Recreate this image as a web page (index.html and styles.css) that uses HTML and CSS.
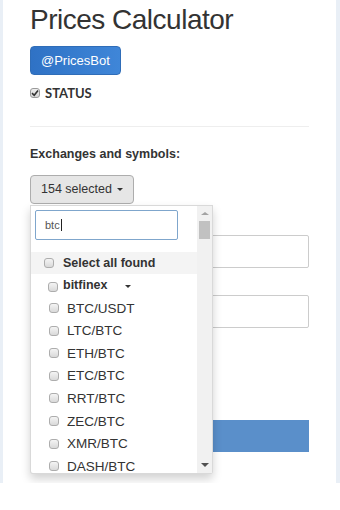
FILE: index.html
```html
<!DOCTYPE html>
<html lang="en">
<head>
    <meta charset="UTF-8">
    <meta name="viewport" content="width=device-width, initial-scale=1.0">
    <title>Prices Calculator</title>
    <link rel="stylesheet" href="styles.css">
</head>
<body>

<div class="page">
<div class="container">

    <h1 class="title">Prices Calculator</h1>
    <a class="btn btn-primary">@PricesBot</a>

    <div class="status">
        <span class="box checked">
            <svg width="8" height="8" viewBox="0 0 8 8"><path d="M1 4.2 L3.2 6.3 L7 1.5" fill="none" stroke="#333" stroke-width="1.6"/></svg>
        </span>
        <span class="status-text">STATUS</span>
    </div>

    <hr>

    <label class="section-label">Exchanges and symbols:</label>

    <!-- Multiselect with open menu -->
    <div class="btn-group">
        <button class="btn btn-default">154 selected <span class="caret"></span></button>

        <div class="dropdown-menu">
            <div class="menu-list">
                <div class="search-box">btc<span class="cursor"></span></div>

                <div class="opt select-all"><span class="box"></span>Select all found</div>
                <div class="opt group"><span class="box"></span>bitfinex <span class="caret group-caret"></span></div>
                <div class="opt item"><span class="box"></span>BTC/USDT</div>
                <div class="opt item"><span class="box"></span>LTC/BTC</div>
                <div class="opt item"><span class="box"></span>ETH/BTC</div>
                <div class="opt item"><span class="box"></span>ETC/BTC</div>
                <div class="opt item"><span class="box"></span>RRT/BTC</div>
                <div class="opt item"><span class="box"></span>ZEC/BTC</div>
                <div class="opt item"><span class="box"></span>XMR/BTC</div>
                <div class="opt item"><span class="box"></span>DASH/BTC</div>
            </div>
            <div class="scrollbar">
                <div class="arrow-up"></div>
                <div class="thumb"></div>
                <div class="track"></div>
                <div class="arrow-down"></div>
            </div>
        </div>
    </div>

    <!-- Form under the menu (labels are hidden by the open menu) -->
    <div class="form-group">
        <input type="text" class="form-control">
    </div>
    <div class="form-group">
        <input type="text" class="form-control">
    </div>
    <div class="note"></div>
    <button class="btn btn-calc"></button>

</div>
</div>

</body>
</html>
```

FILE: styles.css
```css
body {
    margin: 0;
    background-color: #fff;
    font-family: "Liberation Sans", Arial, sans-serif;
    color: #333;
}
.page {
    height: 483px;
    border-left: 3px solid #e9eff6;
    border-right: 4px solid #e9eff6;
    background-color: #fff;
    overflow: hidden;
}
.container {
    padding: 0 27px;
}
.title {
    margin: 5px 0 0;
    font-size: 28px;
    font-weight: normal;
    line-height: 1.1;
    letter-spacing: -0.5px;
    color: #333;
}
.btn {
    display: inline-block;
    box-sizing: border-box;
    font-family: "Liberation Sans", Arial, sans-serif;
    font-size: 13px;
    line-height: 15px;
    padding: 6px 10px;
    border: 1px solid transparent;
    border-radius: 4px;
    cursor: pointer;
}
.btn-primary {
    margin-top: 10px;
    color: #fff;
    background: linear-gradient(to right, #2f72c5, #3f86d8);
    border-color: #2f6db8;
}
.status {
    display: flex;
    align-items: center;
    margin-top: 11px;
    height: 15px;
}
.status-text {
    margin-left: 5px;
    font-family: Lato, "Liberation Sans", sans-serif;
    font-weight: bold;
    font-size: 13px;
    color: #333;
}
.box {
    display: inline-flex;
    align-items: center;
    justify-content: center;
    box-sizing: border-box;
    width: 10px;
    height: 10px;
    border: 1px solid #adadad;
    border-radius: 3px;
    background: linear-gradient(#f4f4f4, #d9d9d9);
    flex-shrink: 0;
}
.box.checked {
    border-color: #9a9a9a;
    background: linear-gradient(#eeeeee, #d6d6d6);
}
hr {
    margin: 25px 0 0;
    border: 0;
    border-top: 1px solid #eee;
}
.section-label {
    display: block;
    margin-top: 18px;
    font-size: 12.5px;
    font-weight: bold;
    line-height: 18px;
}
.btn-group {
    position: relative;
    margin-top: 12px;
    height: 29px;
}
.btn-default {
    height: 29px;
    padding: 6px 10px;
    font-size: 12.5px;
    color: #333;
    background-color: #e6e6e6;
    border-color: #adadad;
}
.caret {
    display: inline-block;
    width: 0;
    height: 0;
    margin-left: 2px;
    vertical-align: middle;
    border-top: 3px solid #333;
    border-left: 3px solid transparent;
    border-right: 3px solid transparent;
}

/* open dropdown */
.dropdown-menu {
    position: absolute;
    z-index: 10;
    top: 30px;
    left: 0;
    width: 183px;
    height: 269px;
    box-sizing: border-box;
    display: flex;
    background-color: #fff;
    border: 1px solid rgba(0, 0, 0, 0.15);
    border-radius: 0 0 3px 3px;
    box-shadow: 0 5px 10px rgba(0, 0, 0, 0.18);
}
.menu-list {
    flex: 1;
    overflow: hidden;
}
.search-box {
    box-sizing: border-box;
    width: 143px;
    height: 30px;
    margin: 4px 0 0 4px;
    padding: 0 9px;
    border: 1px solid #7fa6cc;
    border-radius: 2px;
    font-size: 11px;
    line-height: 28px;
    color: #555;
}
.cursor {
    display: inline-block;
    width: 1px;
    height: 12px;
    margin-left: 1px;
    vertical-align: -2px;
    background-color: #222;
}
.opt {
    display: flex;
    align-items: center;
    font-size: 13.5px;
    color: #333;
    white-space: nowrap;
}
.select-all {
    margin-top: 12px;
    height: 22px;
    padding-left: 13px;
    background-color: #f4f4f4;
    font-weight: bold;
    font-size: 12.5px;
}
.select-all .box {
    margin-right: 9px;
}
.group {
    height: 23px;
    padding-left: 17px;
    font-weight: bold;
    font-size: 12.5px;
}
.group .box {
    align-self: flex-start;
    margin-top: 8px;
    margin-right: 5px;
}
.group-caret {
    margin-left: 18px;
    margin-top: 3px;
}
.item {
    height: 22.6px;
    padding-left: 18px;
}
.item .box {
    margin-right: 8px;
}

/* drawn scrollbar */
.scrollbar {
    width: 15px;
    display: flex;
    flex-direction: column;
    align-items: center;
    background-color: #f1f1f1;
}
.arrow-up {
    width: 0;
    height: 0;
    margin-top: 6px;
    margin-bottom: 6px;
    border-bottom: 3px solid #a3a3a3;
    border-left: 4px solid transparent;
    border-right: 4px solid transparent;
}
.thumb {
    width: 11px;
    height: 18px;
    background-color: #c1c1c1;
}
.track {
    flex: 1;
}
.arrow-down {
    width: 0;
    height: 0;
    margin-bottom: 6px;
    border-top: 4px solid #505050;
    border-left: 4px solid transparent;
    border-right: 4px solid transparent;
}

/* form behind the menu */
.form-group {
    margin-top: 31px;
}
.form-group + .form-group {
    margin-top: 27px;
}
.form-control {
    display: block;
    box-sizing: border-box;
    width: 100%;
    height: 33px;
    margin: 0;
    border: 1px solid #ccc;
    border-radius: 2px;
}
.note {
    width: 40px;
    height: 10px;
    margin-top: 16px;
    border-left: 1px solid #e08a2c;
}
.btn-calc {
    display: block;
    width: 100%;
    height: 32px;
    margin-top: 66px;
    border-radius: 0;
    color: #fff;
    background-color: #5a8fca;
}
```
